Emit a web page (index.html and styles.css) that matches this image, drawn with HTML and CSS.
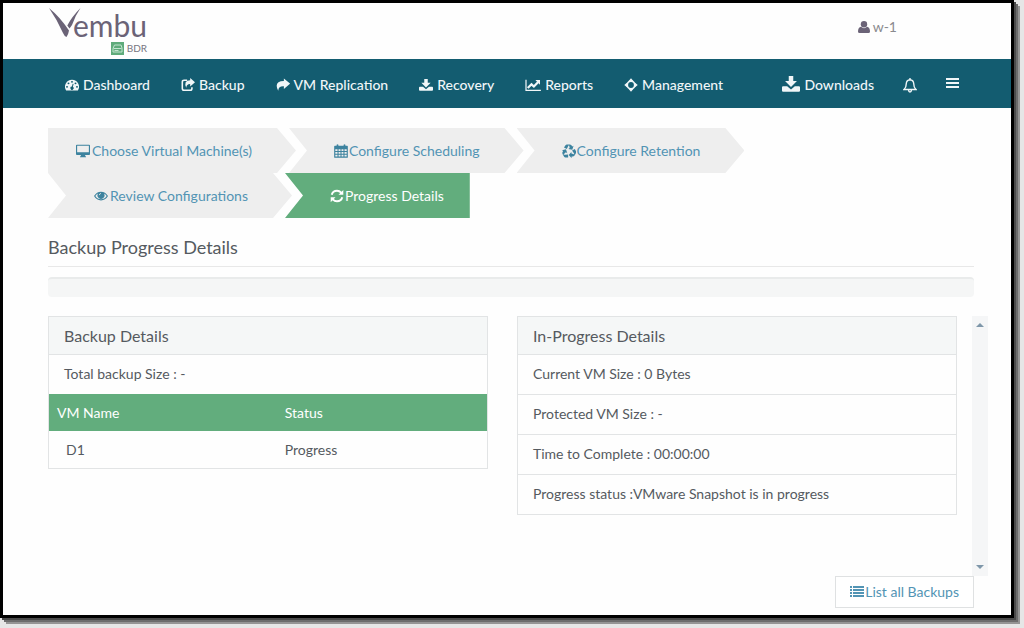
FILE: index.html
```
<!DOCTYPE html>
<html lang="en">
<head>
<meta charset="utf-8">
<meta name="viewport" content="width=device-width, initial-scale=1">
<title>Vembu BDR - Backup Progress Details</title>
<link rel="stylesheet" href="styles.css">
</head>
<body>
<div class="frame">
  <header class="masthead">
    <a class="logo" href="#" aria-label="Vembu BDR">
      <span class="logo-main">
        <svg class="logo-mark" viewBox="0 0 32 31" aria-hidden="true"><path d="M0 0Q11 9 20 22.500Q19.500 26 17.500 29Q15.500 28.500 14 25Q8 11.500 0 0ZM31.500 0Q26 8 23 17L20.500 20.500 18.300 17.500Q23 8.500 31.500 0Z"/></svg>
        <span class="logo-name">embu</span>
      </span>
      <span class="logo-sub">
        <svg class="logo-tile" viewBox="0 0 13 13" aria-hidden="true"><rect width="13" height="13" fill="#5fab7b"/><path d="M3.500 3h6.500l1 3v4H2V6.500ZM2.500 6.500h8M3.500 8.500h4" fill="none" stroke="#c3e4d0"/></svg>
        BDR
      </span>
    </a>
    <a class="user" href="#">
      <svg class="icon icon-user" viewBox="0 0 12 12" aria-hidden="true"><circle cx="6" cy="3.300" r="3.200"/><path d="M3 5.800Q6 8.500 9 5.800Q12 6.500 12 10.500Q12 12 10.500 12H1.500Q0 12 0 10.500Q0 6.500 3 5.800Z"/></svg>
      w-1
    </a>
  </header>

  <nav class="nav" aria-label="Main">
    <a href="#"><svg class="icon" viewBox="0 0 16 16" aria-hidden="true"><path fill-rule="evenodd" d="M8 2a8 8 0 0 0-6.700 12.400h13.400A8 8 0 0 0 8 2ZM8 3.300a1.100 1.100 0 1 1 0 2.200 1.100 1.100 0 0 1 0-2.200ZM4 5a1.100 1.100 0 1 1 0 2.200A1.100 1.100 0 0 1 4 5ZM12 5a1.100 1.100 0 1 1 0 2.200A1.100 1.100 0 0 1 12 5ZM2.300 9a1.100 1.100 0 1 1 0 2.200 1.100 1.100 0 0 1 0-2.200ZM13.700 9a1.100 1.100 0 1 1 0 2.200 1.100 1.100 0 0 1 0-2.200ZM8.800 6.500l1 .3-.8 3.300a1.800 1.800 0 1 1-1.100-.3Z"/></svg>Dashboard</a>
    <a href="#"><svg class="icon" viewBox="0 0 16 16" aria-hidden="true"><path d="M7 2.500H3.500Q1.500 2.500 1.500 4.500V12Q1.500 14 3.500 14H10.500Q12.500 14 12.500 12V10.500" fill="none" stroke="currentColor" stroke-width="1.800"/><path d="M10.500 0L16 4.800 10.500 9.600V7Q6.500 6.800 6 11Q2.500 3 10.500 2.600Z"/></svg>Backup</a>
    <a href="#"><svg class="icon" viewBox="0 0 16 16" aria-hidden="true"><path d="M9 .500L16.200 6.500 9 12.500V9.500Q3 9 2.500 14.500Q-3 3.800 9 3.500Z"/></svg>VM Replication</a>
    <a href="#"><svg class="icon" viewBox="0 0 16 16" aria-hidden="true"><path d="M6 1h4V5.500h3.300L8 10.800 2.700 5.500H6ZM1 10h3.600L8 12.800 11.400 10H15q1 0 1 1v2.500q0 1-1 1H1q-1 0-1-1V11q0-1 1-1Z"/></svg>Recovery</a>
    <a href="#"><svg class="icon icon-wide" viewBox="0 0 18 16" aria-hidden="true"><path d="M1 2V14.200H18" fill="none" stroke="currentColor" stroke-width="1.400"/><path d="M3 11.500L7.300 7.200 10 9.700 15 4.500" fill="none" stroke="currentColor" stroke-width="2.600"/><path d="M11.700 2.300H17V7.600Z"/></svg>Reports</a>
    <a href="#"><svg class="icon" viewBox="0 0 16 16" aria-hidden="true"><circle cx="8" cy="8" r="4.300" fill="none" stroke="currentColor" stroke-width="2"/><path d="M8 .300L11.200 4H4.800ZM8 15.700L4.800 12h6.400ZM.300 8L4 4.800v6.400ZM15.700 8L12 11.200V4.800Z"/></svg>Management</a>
    <div class="nav-tools">
      <a href="#"><svg class="icon icon-large" viewBox="0 0 16 16" aria-hidden="true"><path d="M6 0h4V4.500h3.300L8 9.800 2.700 4.500H6ZM1 9h3.600L8 12 11.400 9H15q1 0 1 1v3q0 1-1 1H1q-1 0-1-1v-3q0-1 1-1Z"/></svg>Downloads</a>
      <button type="button" aria-label="Notifications"><svg class="icon icon-bell" viewBox="0 0 14 16" aria-hidden="true"><path d="M1 12.500Q3.300 10.500 3.300 6.500Q3.500 3 7 2.700Q10.500 3 10.700 6.500Q10.700 10.500 13 12.500ZM7 1v1.700M5.500 13Q5.700 15 7 15T8.500 13" fill="none" stroke="currentColor" stroke-width="1.400"/></svg></button>
      <button class="menu" type="button" aria-label="Menu"><svg class="icon" viewBox="0 0 14 14" aria-hidden="true"><path d="M0 2h13v2H0ZM0 6h13v2H0ZM0 10h13v2H0Z"/></svg></button>
    </div>
  </nav>

  <main class="content">
    <ol class="steps">
      <li><a href="#"><svg class="icon icon-wide" viewBox="0 0 16 16" aria-hidden="true"><path fill-rule="evenodd" d="M1 .800h14q1 0 1 1v9.700q0 1-1 1h-4.500v1.200l1 .800v.500h-7v-.500l1-.800v-1.200H1q-1 0-1-1v-9.700q0-1 1-1ZM1.300 2.100v7.400h13.400V2.100Z"/></svg>Choose Virtual Machine(s)</a></li>
      <li><a href="#"><svg class="icon" viewBox="0 0 16 16" aria-hidden="true"><path fill-rule="evenodd" d="M1 2h2V.800q1-1 2 0V2h6V.800q1-1 2 0V2h2q.800 0 .800.800V15q0 .800-.800.800H1q-.800 0-.800-.800V2.800q0-.800.800-.800ZM1.500 6v2H4V6ZM5.200 6v2h2.200V6ZM8.600 6v2h2.200V6ZM12 6v2h2.500V6ZM1.500 9.200v2H4v-2ZM5.200 9.200v2h2.200v-2ZM8.600 9.200v2h2.200v-2ZM12 9.200v2h2.500v-2ZM1.500 12.400v2H4v-2ZM5.200 12.400v2h2.200v-2ZM8.600 12.400v2h2.200v-2ZM12 12.400v2h2.500v-2Z"/></svg>Configure Scheduling</a></li>
      <li><a href="#"><svg class="icon" viewBox="0 0 16 16" aria-hidden="true"><g id="arm"><path d="M5.500 5.800L2.300 4 4 1.300Q4.500.500 5.500.500H9.500Q7.900.800 7 2.500ZM8 1Q9.800 0 11 1.600L11.700 2.800 13.200 2 11.800 6.600 7.200 5.700 8.800 4.700Z"/></g><use href="#arm" transform="rotate(120 8 8.400)"/><use href="#arm" transform="rotate(240 8 8.400)"/></svg>Configure Retention</a></li>
      <li><a href="#"><svg class="icon icon-wide" viewBox="0 0 16 16" aria-hidden="true"><path fill-rule="evenodd" d="M0 8Q3 3 8 3T16 8Q13 13 8 13T0 8ZM1.500 8Q4 11.800 8 11.800T14.500 8Q13.300 6 11.400 5.100A4 4 0 1 1 4.600 5.100Q2.700 6 1.500 8Z"/><path d="M6 7Q6.200 5.300 8 5" fill="none" stroke="#eeeeee" stroke-width=".9"/></svg>Review Configurations</a></li>
      <li class="current" aria-current="step"><a href="#"><svg class="icon" viewBox="0 0 16 16" aria-hidden="true"><path d="M2 6.500Q3.200 2 8 2Q10.800 2 12.800 4.200M14 9.500Q12.800 14 8 14Q5.200 14 3.200 11.800" fill="none" stroke="currentColor" stroke-width="2.300"/><path d="M15.200 1V6.500H9.700ZM.800 15V9.500H6.300Z"/></svg>Progress Details</a></li>
    </ol>

    <h1>Backup Progress Details</h1>
    <div class="progress" role="progressbar" aria-label="Backup progress" aria-valuemin="0" aria-valuemax="100" aria-valuenow="0"></div>

    <div class="details">
      <div class="panels">
        <section class="panel">
          <h2>Backup Details</h2>
          <p>Total backup Size : -</p>
          <table>
            <thead><tr><th scope="col">VM Name</th><th scope="col">Status</th></tr></thead>
            <tbody><tr><td>D1</td><td>Progress</td></tr></tbody>
          </table>
        </section>
        <section class="panel">
          <h2>In-Progress Details</h2>
          <p>Current VM Size : 0 Bytes</p>
          <p>Protected VM Size : -</p>
          <p>Time to Complete : 00:00:00</p>
          <p>Progress status :VMware Snapshot is in progress</p>
        </section>
      </div>
      <div class="scroll-track" aria-hidden="true">
        <svg viewBox="0 0 8 4"><path d="M0 4L4 0 8 4Z"/></svg>
        <svg viewBox="0 0 8 4"><path d="M0 0H8L4 4Z"/></svg>
      </div>
    </div>

    <div class="actions">
      <button type="button"><svg class="icon" viewBox="0 0 14 14" aria-hidden="true"><path d="M0 1h2v2H0ZM3 1h11v2H3ZM0 4h2v2H0ZM3 4h11v2H3ZM0 7h2v2H0ZM3 7h11v2H3ZM0 10h2v2H0ZM3 10h11v2H3Z"/></svg>List all Backups</button>
    </div>
  </main>
</div>
</body>
</html>
```
FILE: styles.css
```
* {
  box-sizing: border-box;
}

body {
  margin: 0;
  background: #e6e6e6;
  color: #555a60;
  font: 14px/20px Lato, "Open Sans", sans-serif;
}

a {
  color: inherit;
  text-decoration: none;
}

button {
  padding: 0;
  border: 0;
  background: none;
  color: inherit;
  font: inherit;
}

.icon {
  flex: none;
  width: 14px;
  height: 14px;
  fill: currentColor;
}

.icon-wide {
  width: 16px;
}

.frame {
  display: flex;
  flex-direction: column;
  min-height: calc(100vh - 10px);
  margin: 0 10px 10px 0;
  border: 3px solid #000;
  background: #fefefe;
  box-shadow: 2px 2px #4a4a4a, 4px 4px #6c6c6c, 6px 6px #949494;
}

.masthead {
  display: flex;
  justify-content: space-between;
  align-items: flex-start;
  height: 56px;
  padding: 5px 114px 0 46px;
}

.logo {
  display: flex;
  flex-direction: column;
  align-items: flex-end;
  color: #6b6377;
}

.logo-main {
  display: flex;
  align-items: flex-start;
}

.logo-mark {
  width: 32px;
  height: 31px;
  margin-right: -8px;
  fill: currentColor;
}

.logo-name {
  font-size: 30px;
  line-height: 34px;
}

.logo-sub {
  display: flex;
  align-items: center;
  gap: 3px;
  font-size: 10px;
  line-height: 13px;
  color: #777580;
}

.logo-tile {
  width: 13px;
  height: 13px;
}

.user {
  display: flex;
  align-items: center;
  gap: 3px;
  margin-top: 9px;
  color: #8a8a8e;
}

.icon-user {
  width: 12px;
  height: 12px;
  color: #6b6377;
}

.nav {
  display: flex;
  align-items: center;
  gap: 31px;
  height: 49px;
  padding: 3px 51px 0 62px;
  background: #135c70;
  color: #f0f6f8;
  font-weight: 500;
}

.nav a {
  display: flex;
  align-items: center;
  gap: 4px;
}

.nav-tools {
  display: flex;
  align-items: center;
  gap: 29px;
  margin-left: auto;
}

.nav-tools button {
  display: flex;
}

.nav .icon-large {
  width: 18px;
  height: 18px;
}

.nav .icon-bell {
  height: 16px;
}

.nav-tools .menu {
  margin-bottom: 5px;
}

.content {
  padding: 20px 37px 7px 45px;
}

.steps {
  display: flex;
  flex-wrap: wrap;
  margin: 0;
  padding: 0;
  list-style: none;
}

.steps li {
  margin-right: -7px;
}

.steps a {
  display: flex;
  align-items: center;
  gap: 1px;
  height: 45px;
  padding: 0 44px 0 45px;
  background: #eee;
  color: #5294b4;
  clip-path: polygon(0 0, calc(100% - 19px) 0, 100% 50%, calc(100% - 19px) 100%, 0 100%, 18px 50%);
}

.steps .icon {
  color: #3d839f;
}

.steps li:first-child a {
  padding-left: 27px;
  clip-path: polygon(0 0, calc(100% - 19px) 0, 100% 50%, calc(100% - 19px) 100%, 0 100%);
}

.steps .current a {
  padding-right: 26px;
  background: #62ad7d;
  color: #fff;
  clip-path: polygon(0 0, 100% 0, 100% 100%, 0 100%, 18px 50%);
}

.steps .current .icon {
  color: #fff;
}

h1 {
  margin: 17px 0 10px;
  padding-bottom: 7px;
  border-bottom: 1px solid #e8e8e8;
  font-size: 18px;
  font-weight: 400;
  line-height: 24px;
}

.progress {
  height: 20px;
  border-top: 2px solid #e9ebeb;
  border-radius: 4px;
  background: #f5f6f6;
}

.details {
  display: flex;
  gap: 15px;
  min-height: 260px;
  margin: 19px -14px 0 0;
}

.panels {
  display: grid;
  flex: 1;
  grid-template-columns: 1fr 1fr;
  align-items: start;
  gap: 29px;
}

.panel {
  border: 1px solid #e2e4e5;
}

.panel h2 {
  margin: 0;
  padding: 8px 15px;
  background: #f5f7f7;
  font-size: 16px;
  font-weight: 400;
  line-height: 21px;
}

.panel p {
  margin: 0;
  padding: 9px 15px 10px;
  border-top: 1px solid #e2e4e5;
}

.panel table {
  width: 100%;
  border-collapse: collapse;
}

.panel th,
.panel td {
  padding: 8px;
  font-weight: 400;
  line-height: 21px;
  text-align: left;
}

.panel th {
  width: 52%;
  background: #62ad7d;
  color: #fff;
}

.panel th:last-child {
  width: 48%;
}

.panel td:first-child {
  padding-left: 17px;
}

.scroll-track {
  display: flex;
  flex: 0 0 16px;
  flex-direction: column;
  justify-content: space-between;
  align-items: center;
  padding: 7px 0;
  background: #f5f6f7;
}

.scroll-track svg {
  width: 8px;
  height: 4px;
  fill: #7f97aa;
}

.actions {
  display: flex;
  justify-content: flex-end;
}

.actions button {
  display: flex;
  align-items: center;
  gap: 1px;
  height: 32px;
  padding: 0 14px;
  border: 1px solid #dfe1e2;
  background: #fff;
  color: #5294b4;
}
```
